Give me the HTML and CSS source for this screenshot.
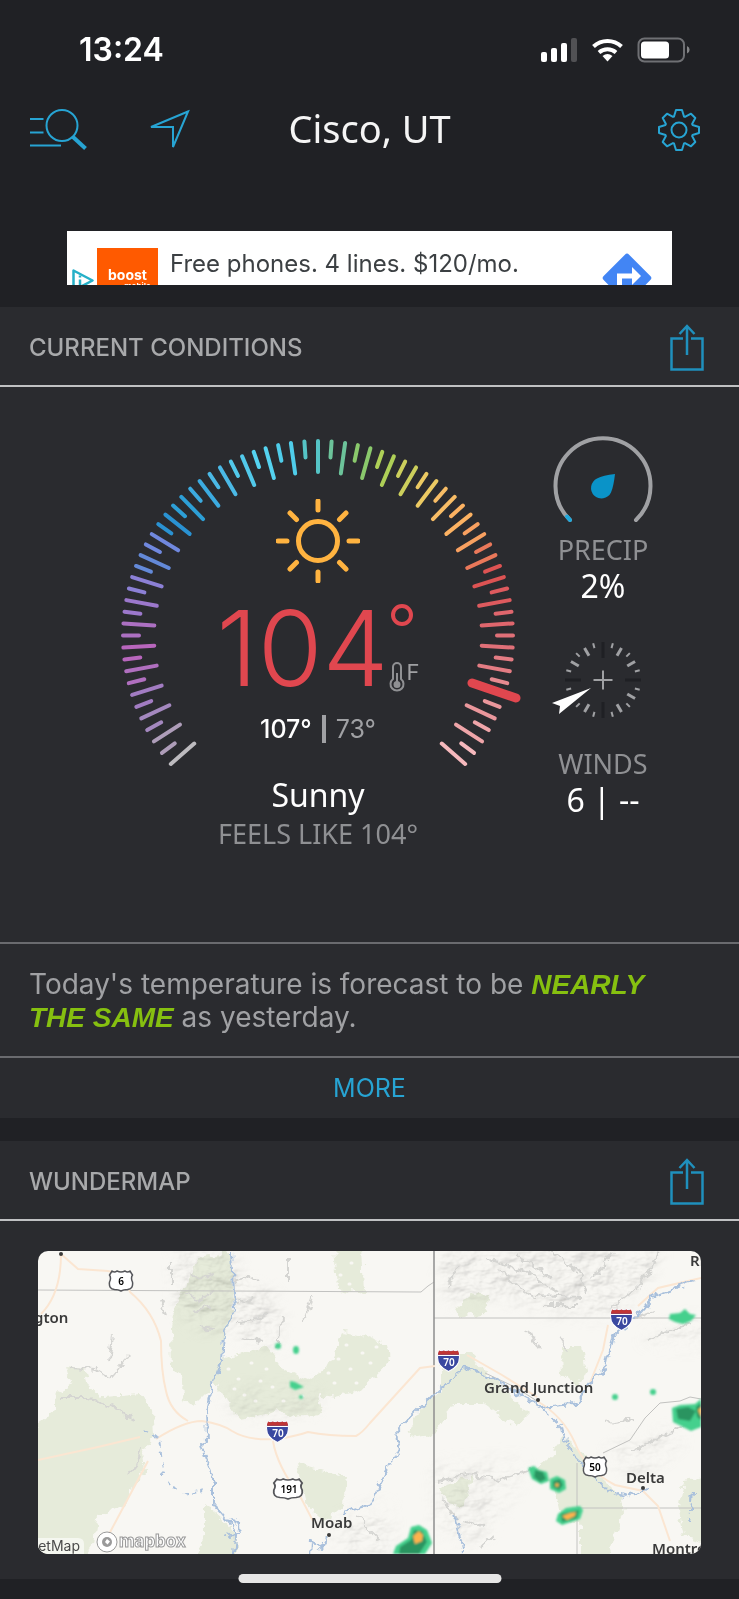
FILE: index.html
```html
<!DOCTYPE html>
<html lang="en">
<head>
    <meta charset="UTF-8">
    <meta name="viewport" content="width=device-width, initial-scale=1.0">
    <title>Cisco, UT</title>
    <link rel="stylesheet" href="styles.css">
</head>
<body>
    <div class="status-bar">
        <span class="time">13:24</span>
        <svg class="status-icons" width="150" height="26" viewBox="0 0 150 26" aria-hidden="true">
            <g fill="#fff">
                <rect x="1" y="15" width="6" height="10" rx="2"/>
                <rect x="11" y="11" width="6" height="14" rx="2"/>
                <rect x="21" y="6" width="6" height="19" rx="2"/>
                <rect x="31" y="1" width="6" height="24" rx="2" opacity=".22"/>
                <path d="M67.500 24.500l-5-5.500a8 8 0 0 1 10 0z"/>
                <rect x="101" y="4.500" width="28" height="17" rx="3.500"/>
                <path d="M147 9v7.500a4 4 0 0 0 0-7.500z" opacity=".45"/>
            </g>
            <g fill="none" stroke="#fff" stroke-width="4">
                <path d="M59 15.500a13 13 0 0 1 17 0"/>
                <path d="M53.500 9.500a20.500 20.500 0 0 1 28 0"/>
            </g>
            <rect x="98.500" y="1.500" width="45.500" height="23" rx="6" fill="none" stroke="#6f7074" stroke-width="2"/>
        </svg>
    </div>

    <header class="top-bar">
        <div class="top-left">
            <button class="icon-btn" aria-label="Search locations">
                <svg width="58" height="42" viewBox="0 0 58 42" fill="none" stroke="#27a4d3" stroke-width="2">
                    <path d="M0 10h13.500M0 23.500h13.500M0 36.500h31"/>
                    <circle cx="32" cy="16.500" r="15.500"/>
                    <path d="M43 28l12.500 11.500" stroke-width="4"/>
                </svg>
            </button>
            <button class="icon-btn" aria-label="Use my location">
                <svg width="44" height="42" viewBox="0 0 44 42" fill="none" stroke="#27a4d3" stroke-width="2">
                    <path d="M40 2.500L3 18h22v20z"/>
                </svg>
            </button>
        </div>
        <h1>Cisco, UT</h1>
        <button class="icon-btn top-right" aria-label="Settings">
            <svg width="44" height="44" viewBox="-22 -22 44 44" fill="none" stroke="#27a4d3" stroke-width="2" stroke-linejoin="round">
                <path d="M-3-20L3-20 5-13.500 6-13.100 12-16.300 16.300-12 13.100-6 13.500-5 20-3 20 3 13.500 5 13.100 6 16.300 12 12 16.300 6 13.100 5 13.500 3 20-3 20-5 13.500-6 13.100-12 16.300-16.300 12-13.100 6-13.500 5-20 3-20-3-13.500-5-13.100-6-16.300-12-12-16.300-6-13.100-5-13.500z"/>
                <circle r="7.500"/>
            </svg>
        </button>
    </header>

    <a class="ad" href="#">
        <svg class="ad-choice" width="22" height="22" viewBox="0 0 22 22" aria-hidden="true">
            <path d="M1.500 1.500v20L20.500 11.500z" fill="none" stroke="#25b0c8" stroke-width="2.500" stroke-linejoin="round"/>
            <path d="M8 6.500v2M8 10.500v7" stroke="#25b0c8" stroke-width="2.500"/>
        </svg>
        <span class="ad-logo">boost<small>mobile</small></span>
        <span class="ad-text">Free phones. 4 lines. $120/mo.</span>
        <svg class="ad-go" width="52" height="52" viewBox="0 0 52 52" aria-hidden="true">
            <rect x="8" y="8" width="36" height="36" rx="3" fill="#4285f4" transform="rotate(45 26 26)"/>
            <path d="M18.500 34V24h14" fill="none" stroke="#fff" stroke-width="5"/>
            <path d="M31 15l9 9-9 9z" fill="#fff"/>
        </svg>
    </a>

    <section class="card">
        <div class="card-head">
            <h2>CURRENT CONDITIONS</h2>
            <button class="icon-btn" aria-label="Share current conditions">
                <svg width="34" height="48" viewBox="0 0 34 48" fill="none" stroke="#1f90bd" stroke-width="2.500">
                    <path d="M13 14.500H1.500v31h31v-31H21M17 31V3M9.500 10L17 2l7.500 8"/>
                </svg>
            </button>
        </div>

        <div class="conditions">
            <div class="gauge">
                <svg class="dial" viewBox="-202 -202 404 340" aria-hidden="true">
                    <g id="ticks" stroke-width="4" stroke-linecap="round"></g>
                    <path d="M154 47l44 15" stroke="#e0474f" stroke-width="9" stroke-linecap="round"/>
                </svg>
                <div class="face">
                    <svg class="sun" width="84" height="84" viewBox="-42 -42 84 84" fill="none" stroke="#ffb340" stroke-width="5" stroke-linecap="round" aria-hidden="true">
                        <circle r="19.500"/>
                        <path d="M0-40v9M0 31v9M-40 0h9M31 0h9M-28-28l6.500 6.500M21.500 21.500l6.500 6.500M-28 28l6.500-6.500M21.500-21.500l6.500-6.500"/>
                    </svg>
                    <div class="temp">
                        <span class="degrees">104</span>
                        <div class="unit">
                            <svg width="24" height="24" viewBox="0 0 24 24" fill="none" stroke="#e0474f" stroke-width="4" aria-label="degrees">
                                <circle cx="13" cy="12" r="9"/>
                            </svg>
                            <div class="scale">
                                <svg width="16" height="32" viewBox="0 0 16 32" fill="none" stroke="#8f9093" stroke-width="2" aria-hidden="true">
                                    <path d="M4 18V6a4 4 0 0 1 8 0v12a6.500 6.500 0 1 1-8 0z"/>
                                    <path d="M8 12v12"/>
                                    <circle cx="8" cy="23.500" r="2.500" fill="#8f9093"/>
                                </svg>
                                <span>F</span>
                            </div>
                        </div>
                    </div>
                    <p class="range"><span class="high">107°</span><span class="bar"></span><span>73°</span></p>
                    <p class="sky">Sunny</p>
                    <p class="feels">FEELS LIKE 104°</p>
                </div>
            </div>

            <div class="stats">
                <div class="stat">
                    <svg width="104" height="98" viewBox="-52 -52 104 98" fill="none" stroke-width="4" stroke-linecap="round" aria-hidden="true">
                        <path d="M-33 34A47.500 47.500 0 1 1 33 34" stroke="#a0a1a4"/>
                        <path d="M-33 34l-3-3.500" stroke="#1fa8dc"/>
                        <path d="M12-12C4-11-2-10-6-7.500a10.500 10.500 0 1 0 14 14C10 2 11-4 12-12z" fill="#0a93c8"/>
                    </svg>
                    <h3>PRECIP</h3>
                    <p>2%</p>
                </div>
                <div class="stat">
                    <svg width="104" height="116" viewBox="-52 -50 104 116" fill="none" aria-hidden="true">
                        <g id="compass"></g>
                        <path d="M-9.500 0h19M0-9.500v19" stroke="#a0a1a4" stroke-width="2"/>
                        <path d="M-51 23L-12 8-44 34l1-8z" fill="#fff"/>
                    </svg>
                    <h3>WINDS</h3>
                    <p>6 | --</p>
                </div>
            </div>
        </div>

        <p class="outlook">Today's temperature is forecast to be <em>NEARLY THE SAME</em> as yesterday.</p>
        <a class="more" href="#">MORE</a>
    </section>

    <section class="card map-card">
        <div class="card-head">
            <h2>WUNDERMAP</h2>
            <button class="icon-btn" aria-label="Share WunderMap">
                <svg width="34" height="48" viewBox="0 0 34 48" fill="none" stroke="#1f90bd" stroke-width="2.500">
                    <path d="M13 14.500H1.500v31h31v-31H21M17 31V3M9.500 10L17 2l7.500 8"/>
                </svg>
            </button>
        </div>

        <svg class="map" viewBox="0 0 663 303">
            <defs>
                <filter id="rough" x="-5%" y="-5%" width="110%" height="110%">
                    <feTurbulence type="fractalNoise" baseFrequency=".11" numOctaves="3" seed="4"/>
                    <feDisplacementMap in="SourceGraphic" scale="11" xChannelSelector="R" yChannelSelector="G"/>
                </filter>
                <filter id="relief" x="0" y="0" width="100%" height="100%">
                    <feTurbulence type="fractalNoise" baseFrequency=".03 .05" numOctaves="4" seed="9"/>
                    <feColorMatrix values="0 0 0 0 0  0 0 0 0 0  0 0 0 0 0  1 0 0 0 0"/>
                    <feDiffuseLighting surfaceScale="9" lighting-color="#fff">
                        <feDistantLight azimuth="225" elevation="58"/>
                    </feDiffuseLighting>
                </filter>
                <filter id="soft"><feGaussianBlur stdDeviation="9"/></filter>
                <filter id="haze"><feGaussianBlur stdDeviation="1"/></filter>
                <mask id="hills">
                    <g fill="#fff" filter="url(#soft)">
                        <path d="M140 0h55l-6 70-22 10-28-25zM190 20l45 25 10 50-45-12z"/>
                        <path d="M402 0h220l-20 40-40 25-60-8-50-15-40 10z"/>
                        <path d="M186 140l90-5 5 25-80 6z" opacity=".6"/>
                        <path d="M398 215l90-5-10 25-40 60-40-20zM290 275l60-25 5 53h-50z" opacity=".6"/>
                        <path d="M566 200l60-20 20 10-50 35zM600 90l63-25v30z" opacity=".7"/>
                    </g>
                </mask>
                <symbol id="interstate" viewBox="0 0 22 22">
                    <path d="M2 1q2.500 1.500 4.500 0 2.500 1.500 4.500 0 2.500 1.500 4.500 0 2.500 1.500 4.500 0 1.500 3 1.500 7 0 9-10.500 13.500Q.500 17 .500 8 .500 4 2 1z" fill="#3a48a0" stroke="#fff"/>
                    <path d="M2 1.500q2.500 1.500 4.500 0 2.500 1.500 4.500 0 2.500 1.500 4.500 0 2.500 1.500 4.500 0 1 2 1 4H1q0-2 1-4z" fill="#c03535"/>
                    <path d="M1 6.200h20" stroke="#fff"/>
                </symbol>
                <symbol id="us-route" viewBox="0 0 26 24" preserveAspectRatio="none">
                    <path d="M4 2q2.500 2 5 0 4 2 8 0 2.500 2 5 0l2.500 4q-2 3 0 7 1 7-5 7.500-4 0-6.500 1.500-2.500-1.500-6.500-1.500-6-.500-5-7.500 2-4 0-7z" fill="#fff" stroke="#55565a" stroke-width="1.500"/>
                </symbol>
            </defs>

            <rect width="663" height="303" fill="#f8f7f3"/>

            <g class="forest" filter="url(#rough)">
                <path d="M28 114l18 2 3 17 14 13 20-1 20-2 11 17 2 23-10 17 2 20-12 13-10 23-27 10-3 27-10 14H-8V180l24-20V146l17-10z"/>
                <path d="M133 76l6-30 10-10 10-30 34-4 1 66-10 23-1 33-14 17-13 13-10-3-3-27-9-6z"/>
                <path d="M179 110l50-14 17 24 23 10 20-14 17-35 23 5 20 7 2 17-28 30-27 6-17-3 5 20-28 3-13-6-40 8-14-18-11-17z"/>
                <path d="M297-6h27l2 48-26-5z"/>
                <path d="M259 213l50 13-3 27-20 17-20-17z"/>
                <path d="M166 253l17 13 16 20v24h-43l10-24z"/>
                <path d="M403 103h30l20 23 38 37-12 13-33-23h-30l-20 30-27 3 17-33 17-13z"/>
                <path d="M523 96h21l5 30-13 7-12-10z"/>
                <path d="M418 56l21-15 12 2-5 20-23 2z"/>
                <path d="M523 186l26 20 14 20 20 20 3 14-17 50h-26v-37l-20-3-7-33-20-17 20-17z"/>
                <path d="M646 230l27-4v67l-27-7-5-26zM402 236l33-10-10 30-15-5z"/>
            </g>
            <g class="clearings">
                <path d="M190 118h1M200 128h1M213 112h1M222 130h1M206 144h1M234 136h1M245 150h1M256 136h1M196 138h1M228 118h1M217 150h1M290 122h1M300 108h1M312 118h1M324 102h1M308 94h1M332 112h1M318 132h1M296 132h1M338 96h1M302 24h1M313 12h1M311 33h1M264 145h1"/>
            </g>

            <g mask="url(#hills)" opacity=".3" class="hills">
                <rect width="663" height="303" filter="url(#relief)"/>
            </g>
            <g class="ridges" filter="url(#rough)">
                <path d="M32 116l25 2 15 9 12-14 6-8M22 147l30 0 25 10 20 12M104 195l-4 18-10 12M133 10v22M122 50l6 15M75 85l-4 25"/>
                <path d="M450 8l40 14 30 20M480 4l35 25M510 0l30 20 10 22M498 44l45 2M505 55l35 0M460 20l40 28M575 2l-20 25M622 0l-18 32-30 26M420 15l-10 20M590 70l25-10M610 88l40-15M490 80l12 18M530 100l-10-15"/>
                <path d="M398 231l30-8 35 5 32-10M404 248l15 20M425 270l20 5M455 285l-12 12M595 200l35-18 20-8M568 172l30-4M318 265l25 25M250 30v-25M265 72l10-30M240 96l4-30"/>
                <path d="M196 30l14-5 8 6M198 52l16-4M200 70l20-2 8-6M205 86l18 4M152 20l10 8 14-4M148 44l16 4 12-8M156 60l18-4M160 76l16 2"/>
            </g>

            <g class="borders">
                <path d="M0 39l190 1 193 1 7-6 6-4M396 67h267M539 212v91M539 257h124"/>
                <path d="M396 0v303" stroke="#8e8e8e" stroke-width="1.500"/>
                <path d="M565 202l27-13 15-22 15-15 20-2 10-4 11 2M447 122l30 14 22 14"/>
            </g>

            <g class="roads">
                <path d="M23 3l17 15 30 2q16 3 22 21 24 20 31 49 0 30 5 50 4 20 22 30"/>
                <path d="M0 209l60-13 42-10M118 188q28-18 46-18 20 3 30 10 16 10 46 8 18-3 30-7 20 4 48 4 6-3 14-13l50-55 15-2M429 104l35 20 35 22M552 132l13-33 5-25M600 55l20-18 43-10"/>
                <path d="M499 150q26 15 38 42 10 26 40 42l28 6 15 15 12 35M235 190q4 25 27 55l13 25M23 3q0 40-20 60M110 210L70 285"/>
            </g>

            <g class="rivers" filter="url(#rough)">
                <path d="M193 0l1 20 2 40-10 23-2 27-10 26-6 24 1 30-6 3 5 17 8 20v23l17 20 5 13-5 40"/>
                <path d="M193 268l8 4 1 10-8 5-5-5M272 310l1-22 8 10 8-14M304 262l28-8 17-34 12-24-2-16 27-27 17-17 25-20 23 10 52 30 33-3 17-23 15-14 6-30 29-25 16-18 37-12"/>
                <path d="M503 156l20 20 5 20 18 17 23 27 17 5 23-7M654 240l-3 30M416 265l6 20 3 18" stroke-dasharray="10 2"/>
                <path d="M106 178l14 10 4 30 5 15 20 10 20-3" stroke-dasharray="5 5"/>
            </g>

            <g filter="url(#haze)">
                <g fill="#45d08d">
                    <ellipse cx="240" cy="95" rx="3" ry="3"/>
                    <ellipse cx="258" cy="99" rx="3" ry="4"/>
                    <path d="M252 130l5 1 9 5-9 3-5-3zM632 63l10-1 5-4 5 5 6 1-5 6-8 3-8-2-6-3z"/>
                    <circle cx="577" cy="146" r="3"/>
                    <circle cx="615" cy="141" r="3"/>
                    <circle cx="263" cy="146" r="2"/>
                    <path d="M634 157l8-3 15-1 6-5v28l-10 4-18-9zM490 217l6-2 5 4 8 2 2 9-8 3-9-5zM512 228l7-3 8 4 1 9-7 4-9-4zM520 263l8-6 14-2 3 4-3 9-18 6-6-4zM358 295l12-8 3-11 8-2 8 5 5 13-7 11h-32z"/>
                </g>
                <g fill="#2a9460">
                    <path d="M638 158l12-2 8 4-6 10-12-2zM658 156l5-4v17l-4-3zM497 219l8 2 3 7-6 3-6-5zM515 230l7-2 3 6-4 5-6-3zM523 263l18-4-2 8-15 4zM362 296l11-7 3-10 8 1 5 11-8 12h-20z"/>
                </g>
                <g fill="#ffb34d">
                    <path d="M524 265l8-3 6-1-1 4-8 4zM375 285l6-5 4 4-1 6-7 3zM518 232l3 1-1 3-3-1zM660 159l3-3v10z"/>
                </g>
            </g>

            <g class="shields">
                <use href="#us-route" x="70" y="18" width="26" height="24"/>
                <use href="#us-route" x="234" y="226" width="32" height="24"/>
                <use href="#us-route" x="544" y="204" width="26" height="24"/>
                <use href="#interstate" x="228" y="169" width="23" height="23"/>
                <use href="#interstate" x="399" y="98" width="23" height="23"/>
                <use href="#interstate" x="572" y="57" width="23" height="23"/>
                <text x="83" y="34">6</text>
                <text x="251" y="242">191</text>
                <text x="557" y="220">50</text>
                <g fill="#fff">
                    <text x="240" y="186">70</text>
                    <text x="411" y="115">70</text>
                    <text x="584" y="74">70</text>
                </g>
            </g>

            <g class="places">
                <circle cx="23" cy="3" r="2"/>
                <circle cx="291" cy="284" r="2"/>
                <circle cx="500" cy="149" r="2"/>
                <circle cx="605" cy="237" r="2"/>
                <text x="-4" y="72">gton</text>
                <text x="273" y="277">Moab</text>
                <text x="446" y="142">Grand Junction</text>
                <text x="588" y="232">Delta</text>
                <text x="614" y="303">Montro</text>
                <text x="652" y="15">Ri</text>
            </g>
            <path d="M0 287h40q6 0 6 6v10H0z" fill="#fff" opacity=".6"/>
            <text class="credit" x="42" y="300" text-anchor="end">eetMap</text>
            <g class="logo">
                <circle cx="69" cy="291" r="10"/>
                <circle cx="69" cy="291" r="5" fill="#9a9a9a" stroke="none"/>
                <path d="M69 288l3 2.500-2.500 3-2.500-2.500z" stroke="none"/>
                <text x="81" y="296">mapbox</text>
            </g>
        </svg>
    </section>

    <div class="home-indicator"></div>

    <script>
        // Long tick angles, measured from the top of the dial
        const angles = [0, 8, 15.6, 22.9, 30.2, 37.4, 44.5, 51.5, 58.5, 65.5, 72.4, 79.4, 86.3, 93.4, 100.4, 107.6, 115, 122.7, 131];

        // Colors of the long ticks, coldest first
        const colors = [
            '#bdbbbf', '#ae9db9', '#a488bf', '#a27cc2', '#b06fbf', '#b866bd', '#ac70c2', '#9c78cc', '#8c80d6', '#6389d8',
            '#7088de', '#2a92d2', '#2d9fd6', '#3cabe0', '#4bb9e6', '#52c9ea', '#55d3f0', '#4fcdea', '#55c4c6',
            '#6cc39a', '#8ac96c', '#aecf57', '#cccf5c', '#ecca63', '#f8bd66', '#fcb262', '#f8a060', '#e9785a', '#dd5353',
            '#dd5a5e', '#df666d', '#e07078', '#e37c83', '#e68a90', '#ea979c', '#efa5a9', '#f6b9bd'
        ];

        function line(parent, angle, from, to, color, width) {
            const el = document.createElementNS('http://www.w3.org/2000/svg', 'line');
            el.setAttribute('y1', -from);
            el.setAttribute('y2', -to);
            el.setAttribute('transform', `rotate(${angle})`);
            el.setAttribute('stroke', color);
            if (width) el.setAttribute('stroke-width', width);
            parent.appendChild(el);
        }

        const all = angles.slice(1).reverse().map(a => -a).concat(angles);
        const ticks = document.getElementById('ticks');
        all.forEach((a, i) => {
            line(ticks, a, 164, 195, colors[i]);
            if (i < all.length - 1) {
                line(ticks, (a + all[i + 1]) / 2, 179, 195, colors[i + 1]);
            }
        });

        // Compass ring, one mark every 15 degrees
        const compass = document.getElementById('compass');
        for (let a = 0; a < 360; a += 15) {
            if (a === 240) continue;
            if (a % 90 === 0) line(compass, a, 22, 38, '#1f2024', 3);
            else if (a % 30 === 0) line(compass, a, 28, 37, '#a0a1a4', 3);
            else line(compass, a, 33, 38, '#a0a1a4', 2);
        }
    </script>
</body>
</html>
```
FILE: styles.css
```css
* {
    box-sizing: border-box;
}
body {
    margin: 0;
    background-color: #202125;
    color: #a0a1a4;
    font-family: Inter, "Liberation Sans", sans-serif;
}
h1, h2, h3, p {
    margin: 0;
    font-weight: 400;
}
svg {
    display: block;
    flex: none;
}
.icon-btn {
    padding: 0;
    border: none;
    background: none;
    cursor: pointer;
}

/* top of the screen */
.status-bar {
    display: flex;
    justify-content: space-between;
    align-items: center;
    padding: 30px 49px 0 79px;
    color: #ffffff;
}
.time {
    font-size: 32px;
    font-weight: 600;
    line-height: 40px;
}
.top-bar {
    display: grid;
    grid-template-columns: 1fr auto 1fr;
    align-items: center;
    height: 120px;
    padding: 0 30px;
}
.top-left {
    display: flex;
    gap: 60px;
}
.top-bar h1 {
    padding-bottom: 5px;
    color: #f5f5f5;
    font-family: "Noto Sans", sans-serif;
    font-size: 38px;
    line-height: 48px;
}
.top-right {
    justify-self: end;
    margin-right: 8px;
}

.ad {
    display: flex;
    align-items: flex-start;
    height: 54px;
    margin: 41px 67px 22px;
    padding-left: 5px;
    overflow: hidden;
    background: #ffffff;
    color: #3c4043;
    text-decoration: none;
}
.ad-choice {
    margin-top: 38px;
}
.ad-logo {
    width: 61px;
    height: 61px;
    margin: 17px 12px 0 3px;
    padding-top: 20px;
    background: #ff5a00;
    color: #ffffff;
    font-size: 14px;
    font-weight: 700;
    line-height: 14px;
    text-align: center;
}
.ad-logo small {
    display: block;
    font-size: 8px;
    line-height: 8px;
    padding-left: 20px;
}
.ad-text {
    flex: 1;
    padding-top: 17px;
    font-size: 24px;
    line-height: 32px;
    white-space: nowrap;
}
.ad-go {
    margin: 21px 19px 0 0;
}

/* cards */
.card {
    margin-bottom: 23px;
    background: #2a2b2f;
}
.card-head {
    display: flex;
    justify-content: space-between;
    align-items: center;
    height: 80px;
    padding: 3px 35px 0 29px;
    border-bottom: 2px solid #c0c1c3;
}
.card-head h2 {
    color: #a8a9ab;
    font-size: 24px;
    font-weight: 500;
    line-height: 32px;
}

.conditions {
    display: flex;
    justify-content: space-between;
    min-height: 555px;
    padding: 47px 66px 0 116px;
}
.gauge {
    display: grid;
    width: 404px;
}
.dial, .face {
    grid-area: 1 / 1;
}
.dial {
    width: 100%;
    overflow: visible;
}
.face {
    display: flex;
    flex-direction: column;
    align-items: center;
    padding-top: 65px;
}
.temp {
    display: flex;
    height: 110px;
    margin-top: 10px;
}
.degrees {
    color: #e0474f;
    font-size: 105px;
    font-weight: 300;
    line-height: 110px;
}
.unit {
    padding-top: 10px;
}
.scale {
    display: flex;
    gap: 2px;
    margin-top: 34px;
    font-size: 22px;
    line-height: 22px;
}
.range {
    display: flex;
    align-items: center;
    gap: 10px;
    margin-top: 10px;
    font-size: 25px;
    line-height: 32px;
}
.range .high {
    color: #ffffff;
    font-weight: 500;
}
.range .bar {
    width: 4px;
    height: 28px;
    background: #a0a1a4;
}
.sky {
    margin-top: 28px;
    color: #ffffff;
    font-family: "Noto Sans", sans-serif;
    font-size: 32px;
    line-height: 44px;
}
.feels {
    color: #8f9093;
    font-family: "Noto Sans", sans-serif;
    font-size: 27px;
    line-height: 34px;
}

.stats {
    width: 140px;
}
.stat {
    display: flex;
    flex-direction: column;
    align-items: center;
    margin-bottom: 26px;
    font-family: "Noto Sans", sans-serif;
}
.stat h3 {
    color: #8f9093;
    font-size: 27px;
    line-height: 36px;
}
.stat p {
    color: #ffffff;
    font-size: 32px;
    line-height: 36px;
}

.outlook {
    padding: 24px 48px 22px 29px;
    border-top: 2px solid #6a6b6f;
    border-bottom: 2px solid #6a6b6f;
    font-size: 28px;
    line-height: 33px;
}
.outlook em {
    color: #86c010;
    font-family: "Liberation Sans", sans-serif;
    font-weight: 700;
}
.more {
    display: block;
    color: #27a4d3;
    font-size: 25px;
    line-height: 60px;
    text-align: center;
    text-decoration: none;
}

/* map */
.map-card {
    margin-bottom: 0;
    padding-bottom: 25px;
}
.map {
    width: calc(100% - 76px);
    margin: 30px 38px 0;
    border-radius: 10px;
    overflow: hidden;
}
.forest {
    fill: #e6ebda;
}
.clearings {
    stroke: #f8f7f3;
    stroke-width: 3;
    stroke-linecap: round;
}
.hills {
    mix-blend-mode: multiply;
}
.ridges {
    fill: none;
    stroke: #d5d5d2;
    stroke-width: 2;
}
.borders {
    fill: none;
    stroke: #c2c2c0;
}
.roads {
    fill: none;
    stroke: #fbe6d2;
    stroke-width: 2;
}
.rivers {
    fill: none;
    stroke: #a9c0dc;
    stroke-width: 2;
}
.shields text {
    font: 600 10px "Noto Sans", sans-serif;
    text-anchor: middle;
}
.places {
    font: 600 15px "Noto Sans", sans-serif;
    fill: #3a3a3a;
}
.credit {
    font: 14px Inter, sans-serif;
    fill: #4a4a4a;
}
.logo {
    fill: #ffffff;
    stroke: #9a9a9a;
}
.logo text {
    font: 700 17px Inter, sans-serif;
}

.home-indicator {
    position: fixed;
    left: 50%;
    bottom: 16px;
    width: 263px;
    height: 9px;
    border-radius: 5px;
    background: #e6e6e6;
    transform: translateX(-50%);
}
```
